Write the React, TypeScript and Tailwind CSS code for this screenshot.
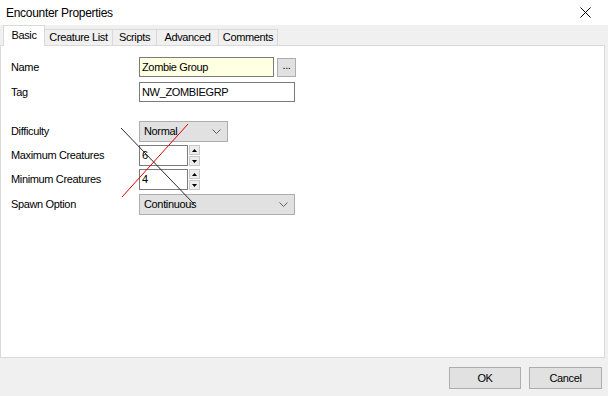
import React from 'react';

const tabs = [
  { label: 'Basic', w: 'w-[42px]', active: true },
  { label: 'Creature List', w: 'w-[68px]', active: false },
  { label: 'Scripts', w: 'w-[44px]', active: false },
  { label: 'Advanced', w: 'w-[62px]', active: false },
  { label: 'Comments', w: 'w-[59px]', active: false },
];

function Chevron() {
  return (
    <svg width="9" height="5" viewBox="0 0 9 5" className="mr-[6px]">
      <path d="M0.5 0.5 L4.5 4.5 L8.5 0.5" fill="none" stroke="#606060" strokeWidth="1" />
    </svg>
  );
}

function Spin() {
  return (
    <div className="ml-[1px] flex w-[11px] flex-col gap-[1px]">
      <div className="flex h-[10px] items-center justify-center border border-[#c8c8c8] bg-[#ececec]">
        <svg width="5" height="3" viewBox="0 0 5 3">
          <path d="M2.5 0 L5 3 L0 3 Z" fill="#000" />
        </svg>
      </div>
      <div className="flex h-[10px] items-center justify-center border border-[#c8c8c8] bg-[#ececec]">
        <svg width="5" height="3" viewBox="0 0 5 3">
          <path d="M0 0 L5 0 L2.5 3 Z" fill="#000" />
        </svg>
      </div>
    </div>
  );
}

function Row({ label, className, children }: { label: string; className: string; children: React.ReactNode }) {
  return (
    <div className={`flex items-center ${className}`}>
      <div className="w-[128px]">{label}</div>
      {children}
    </div>
  );
}

export default function App() {
  return (
    <div
      className="relative h-[396px] w-[608px] overflow-hidden bg-[#f0f0f0] text-[11px] tracking-[-0.35px] text-black"
      style={{ fontFamily: '"Liberation Sans", Arial, sans-serif' }}
    >
      <div className="flex h-[25px] items-center justify-between bg-white pl-[6px] pr-[17px]">
        <span className="text-[12px] tracking-[-0.3px]">Encounter Properties</span>
        <svg width="11" height="11" viewBox="0 0 11 11">
          <path d="M0.5 0.5 L10.5 10.5 M10.5 0.5 L0.5 10.5" stroke="#000" strokeWidth="1" />
        </svg>
      </div>

      <div className="flex h-[20px] items-end pl-[3px]">
        {tabs.map((t) =>
          t.active ? (
            <div
              key={t.label}
              className={`relative z-10 -mb-px flex h-[21px] items-center justify-center border border-b-0 border-[#d9d9d9] bg-white pb-[2px] ${t.w}`}
            >
              {t.label}
            </div>
          ) : (
            <div
              key={t.label}
              className={`flex h-[16px] items-center justify-center border border-b-0 border-l-0 border-[#d9d9d9] bg-[#f0f0f0] ${t.w}`}
            >
              {t.label}
            </div>
          ),
        )}
      </div>

      <div className="flex h-[313px] w-[605px] flex-col border border-[#d9d9d9] bg-white pl-[10px]">
        <Row label="Name" className="mt-[11px] h-[20px]">
          <div className="flex h-[20px] w-[135px] items-center border border-[#7a7a7a] bg-[#ffffe1] pl-[2px]">
            Zombie Group
          </div>
          <div className="ml-[3px] flex h-[19px] w-[19px] items-end justify-center border border-[#adadad] bg-[#e1e1e1] pb-[2px]">
            ...
          </div>
        </Row>
        <Row label="Tag" className="mt-[5px] h-[20px]">
          <div className="flex h-[20px] w-[156px] items-center border border-[#7a7a7a] bg-white pl-[2px]">
            NW_ZOMBIEGRP
          </div>
        </Row>
        <Row label="Difficulty" className="mt-[19px] h-[21px]">
          <div className="flex h-[21px] w-[89px] items-center justify-between border border-[#adadad] bg-[#e1e1e1] pl-[4px]">
            <span>Normal</span>
            <Chevron />
          </div>
        </Row>
        <Row label="Maximum Creatures" className="mt-[3px] h-[21px]">
          <div className="flex h-[21px] w-[49px] items-center border border-[#7a7a7a] bg-white pl-[2px]">6</div>
          <Spin />
        </Row>
        <Row label="Minimum Creatures" className="mt-[3px] h-[21px]">
          <div className="flex h-[21px] w-[49px] items-center border border-[#7a7a7a] bg-white pl-[2px]">4</div>
          <Spin />
        </Row>
        <Row label="Spawn Option" className="mt-[4px] h-[20px]">
          <div className="flex h-[21px] w-[156px] items-center justify-between border border-[#adadad] bg-[#e1e1e1] pl-[4px]">
            <span>Continuous</span>
            <Chevron />
          </div>
        </Row>
      </div>

      <div className="mt-[9px] flex justify-end gap-[8px] pr-[6px]">
        <button className="flex h-[22px] w-[72px] items-center justify-center border border-[#adadad] bg-[#e1e1e1]">
          OK
        </button>
        <button className="flex h-[22px] w-[73px] items-center justify-center border border-[#adadad] bg-[#e1e1e1]">
          Cancel
        </button>
      </div>

      <svg className="pointer-events-none absolute left-0 top-0" width="608" height="396">
        <line x1="121" y1="128" x2="194" y2="204" stroke="#2a2a2a" strokeWidth="1" />
        <line x1="188" y1="124" x2="122" y2="197" stroke="#e00000" strokeWidth="1" />
      </svg>
    </div>
  );
}
